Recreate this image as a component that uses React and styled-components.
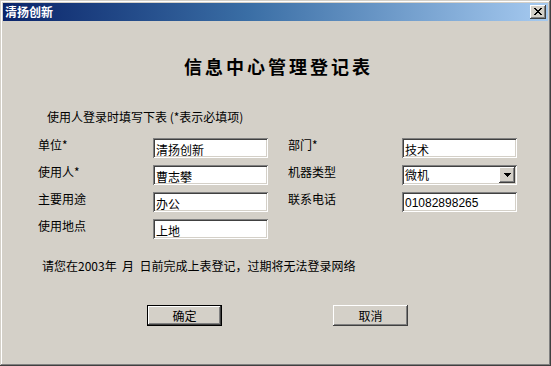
import React from "react";
import styled, { createGlobalStyle } from "styled-components";

const GlobalStyle = createGlobalStyle`
  html, body {
    margin: 0;
    padding: 0;
    background: #d4d0c8;
  }
  body {
    font-family: "Liberation Sans", "Noto Sans CJK SC", sans-serif;
    font-size: 12px;
    color: #000;
  }
  * { box-sizing: border-box; }
`;

const Window = styled.div`
  width: 551px;
  height: 366px;
  padding: 3px;
  background: #d4d0c8;
  box-shadow: inset -1px -1px #404040, inset 1px 1px #d4d0c8,
    inset -2px -2px #808080, inset 2px 2px #ffffff;
  display: flex;
  flex-direction: column;
`;

const TitleBar = styled.div`
  height: 18px;
  display: flex;
  align-items: center;
  justify-content: space-between;
  padding: 0 2px 0 2px;
  background: linear-gradient(to right, #0a246a 0%, #3a6ea5 45%, #a6caf0 100%);
`;

const TitleText = styled.span`
  color: #ffffff;
  font-weight: bold;
  font-size: 12px;
  line-height: 14px;
  font-family: "Noto Sans CJK SC", sans-serif;
`;

const raised = `
  background: #d4d0c8;
  box-shadow: inset -1px -1px #404040, inset 1px 1px #ffffff,
    inset -2px -2px #808080, inset 2px 2px #d4d0c8;
`;

const CloseButton = styled.div`
  width: 16px;
  height: 14px;
  ${raised}
  display: flex;
  align-items: center;
  justify-content: center;
  padding-bottom: 1px;
`;

const Body = styled.div`
  flex: 1;
  display: flex;
  flex-direction: column;
  font-family: "Noto Sans CJK SC", sans-serif;
`;

const Heading = styled.div`
  margin-top: 36px;
  padding-left: 181px;
  font-size: 18px;
  line-height: 18px;
  font-weight: bold;
  letter-spacing: 3px;
`;

const Hint = styled.div`
  margin-top: 36px;
  padding-left: 44px;
  font-size: 12px;
  line-height: 12px;
`;

const FormArea = styled.div`
  margin-top: 15px;
  padding-left: 35px;
  display: flex;
  gap: 20px;
  align-items: flex-start;
`;

const Column = styled.div`
  display: flex;
  flex-direction: column;
  gap: 7px;
`;

const Row = styled.div`
  display: flex;
  align-items: flex-start;
  height: 20px;
`;

const Label = styled.div`
  width: ${(p) => p.$w}px;
  flex-shrink: 0;
  font-size: 12px;
  line-height: 12px;
  padding-top: 1px;
`;

const sunken = `
  background: #ffffff;
  box-shadow: inset 1px 1px #808080, inset -1px -1px #ffffff,
    inset 2px 2px #404040, inset -2px -2px #d4d0c8;
`;

const TextBox = styled.input`
  width: 115px;
  height: 20px;
  flex-shrink: 0;
  border: none;
  outline: none;
  margin: 0;
  padding: 2px 3px 0 3px;
  ${sunken}
  font-family: "Liberation Sans", "Noto Sans CJK SC", sans-serif;
  font-size: 12px;
  line-height: 16px;
  color: #000;
`;

const Combo = styled.div`
  width: 115px;
  height: 20px;
  flex-shrink: 0;
  ${sunken}
  padding: 2px;
  display: flex;
  align-items: center;
  justify-content: space-between;
`;

const ComboText = styled.span`
  padding-left: 1px;
  font-size: 12px;
  line-height: 16px;
`;

const ComboArrow = styled.div`
  width: 16px;
  height: 16px;
  ${raised}
  display: flex;
  align-items: center;
  justify-content: center;
`;

const Note = styled.div`
  margin-top: 21px;
  padding-left: 39px;
  font-size: 12px;
  line-height: 12px;
  white-space: pre;
`;

const ButtonRow = styled.div`
  margin-top: 33px;
  padding-left: 144px;
  display: flex;
  gap: 111px;
`;

const PushButton = styled.button`
  width: 75px;
  height: 21px;
  margin: 0;
  padding: 0;
  border: ${(p) => (p.$default ? "1px solid #000" : "none")};
  background: #d4d0c8;
  box-shadow: inset -1px -1px #404040, inset 1px 1px #ffffff,
    inset -2px -2px #808080, inset 2px 2px #d4d0c8;
  font-family: "Noto Sans CJK SC", sans-serif;
  font-size: 12px;
  line-height: 14px;
  color: #000;
  display: flex;
  align-items: center;
  justify-content: center;
`;

const CloseGlyph = () => (
  <svg width="8" height="7" viewBox="0 0 8 7" shapeRendering="crispEdges">
    <g fill="#000">
      <rect x="0" y="0" width="2" height="1" />
      <rect x="6" y="0" width="2" height="1" />
      <rect x="1" y="1" width="2" height="1" />
      <rect x="5" y="1" width="2" height="1" />
      <rect x="2" y="2" width="4" height="1" />
      <rect x="3" y="3" width="2" height="1" />
      <rect x="2" y="4" width="4" height="1" />
      <rect x="1" y="5" width="2" height="1" />
      <rect x="5" y="5" width="2" height="1" />
      <rect x="0" y="6" width="2" height="1" />
      <rect x="6" y="6" width="2" height="1" />
    </g>
  </svg>
);

const ArrowGlyph = () => (
  <svg width="7" height="4" viewBox="0 0 7 4" shapeRendering="crispEdges">
    <g fill="#000">
      <rect x="0" y="0" width="7" height="1" />
      <rect x="1" y="1" width="5" height="1" />
      <rect x="2" y="2" width="3" height="1" />
      <rect x="3" y="3" width="1" height="1" />
    </g>
  </svg>
);

const leftFields = [
  ["单位*", "清扬创新"],
  ["使用人*", "曹志攀"],
  ["主要用途", "办公"],
  ["使用地点", "上地"],
];

export default function App() {
  return (
    <>
      <GlobalStyle />
      <Window>
        <TitleBar>
          <TitleText>清扬创新</TitleText>
          <CloseButton>
            <CloseGlyph />
          </CloseButton>
        </TitleBar>
        <Body>
          <Heading>信息中心管理登记表</Heading>
          <Hint>使用人登录时填写下表 (*表示必填项)</Hint>
          <FormArea>
            <Column>
              {leftFields.map(([label, value]) => (
                <Row key={label}>
                  <Label $w={115}>{label}</Label>
                  <TextBox readOnly value={value} />
                </Row>
              ))}
            </Column>
            <Column>
              <Row>
                <Label $w={114}>部门*</Label>
                <TextBox readOnly value="技术" />
              </Row>
              <Row>
                <Label $w={114}>机器类型</Label>
                <Combo>
                  <ComboText>微机</ComboText>
                  <ComboArrow>
                    <ArrowGlyph />
                  </ComboArrow>
                </Combo>
              </Row>
              <Row>
                <Label $w={114}>联系电话</Label>
                <TextBox readOnly value="01082898265" />
              </Row>
            </Column>
          </FormArea>
          <Note>请您在2003年  月  日前完成上表登记，过期将无法登录网络</Note>
          <ButtonRow>
            <PushButton $default>确定</PushButton>
            <PushButton>取消</PushButton>
          </ButtonRow>
        </Body>
      </Window>
    </>
  );
}
